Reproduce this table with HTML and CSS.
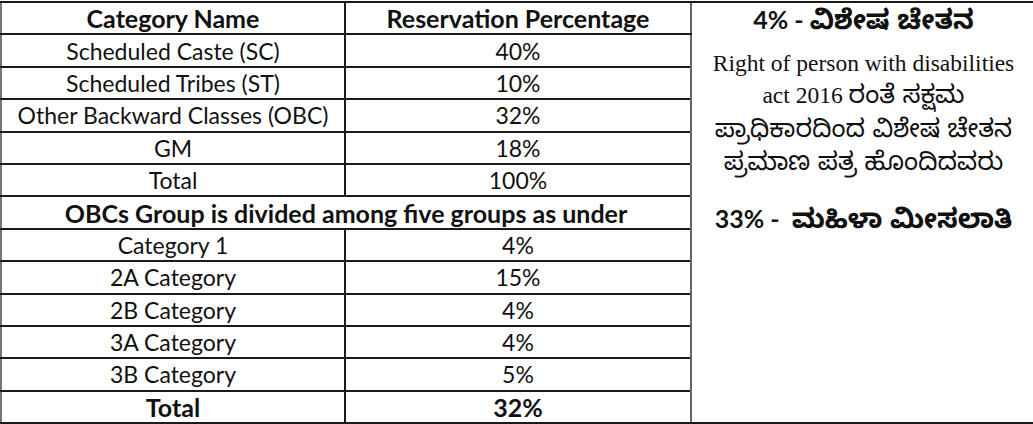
FILE: index.html
```html
<!DOCTYPE html>
<html lang="en">
<head>
<meta charset="utf-8">
<title>Reservation Percentage</title>
<link rel="stylesheet" href="styles.css">
</head>
<body>
<table class="res-table">
  <colgroup>
    <col class="col-name">
    <col class="col-pct">
    <col class="col-note">
  </colgroup>
  <tr>
    <th>Category Name</th>
    <th>Reservation Percentage</th>
    <td class="note" rowspan="13">
      <p class="note-head">4% - <span class="kn">ವಿಶೇಷ ಚೇತನ</span></p>
      <p class="note-body">Right of person with disabilities<br>act 2016 <span class="kn">ರಂತೆ ಸಕ್ಷಮ</span><br><span class="kn">ಪ್ರಾಧಿಕಾರದಿಂದ ವಿಶೇಷ ಚೇತನ</span><br><span class="kn">ಪ್ರಮಾಣ ಪತ್ರ ಹೊಂದಿದವರು</span></p>
      <p class="note-head note-women">33% -&nbsp; <span class="kn">ಮಹಿಳಾ ಮೀಸಲಾತಿ</span></p>
    </td>
  </tr>
  <tr><td>Scheduled Caste (SC)</td><td>40%</td></tr>
  <tr><td>Scheduled Tribes (ST)</td><td>10%</td></tr>
  <tr><td>Other Backward Classes (OBC)</td><td>32%</td></tr>
  <tr><td>GM</td><td>18%</td></tr>
  <tr><td>Total</td><td>100%</td></tr>
  <tr><th colspan="2">OBCs Group is divided among five groups as under</th></tr>
  <tr><td>Category 1</td><td>4%</td></tr>
  <tr><td>2A Category</td><td>15%</td></tr>
  <tr><td>2B Category</td><td>4%</td></tr>
  <tr><td>3A Category</td><td>4%</td></tr>
  <tr><td>3B Category</td><td>5%</td></tr>
  <tr class="total"><td>Total</td><td>32%</td></tr>
</table>
</body>
</html>
```

FILE: styles.css
```css
html, body {
  margin: 0;
  padding: 0;
  background: #ffffff;
}

.res-table {
  border-collapse: collapse;
  table-layout: fixed;
  width: 1034px;
  margin-top: 1px;
  font-family: "Lato", "Open Sans", sans-serif;
  font-size: 23px;
  color: #111111;
}

.col-name { width: 344px; }
.col-pct { width: 346px; }
.col-note { width: 344px; }

.res-table tr {
  height: 32.4px;
}

.res-table th,
.res-table td {
  border-top: 2px solid #1a1a1a;
  border-bottom: 2px solid #1a1a1a;
  border-left: 2px solid #1a1a1a;
  padding: 0;
  text-align: center;
  vertical-align: middle;
  line-height: 28px;
  font-weight: 400;
  white-space: nowrap;
}

.res-table th {
  font-weight: 700;
  font-size: 25px;
}

.res-table tr > :first-child {
  border-left-color: #777777;
}

.res-table .total td {
  font-weight: 700;
  font-size: 25px;
}

.res-table td.note {
  border-left: 2px solid #666666;
  border-right: none;
  vertical-align: top;
  padding: 0;
}

.note p {
  margin: 0;
}

.kn {
  font-family: "Noto Sans Kannada", "Tunga", "Noto Serif Kannada", "Lohit Kannada", sans-serif;
  font-size: 25.5px;
  line-height: 1;
}

.note-head {
  font-family: "Lato", "Open Sans", sans-serif;
  font-weight: 700;
  font-size: 25px;
  line-height: 32px;
}

.note-head .kn {
  font-size: 27px;
}

.note-body {
  margin-top: 8px !important;
  font-family: "Liberation Serif", "Times New Roman", serif;
  font-size: 23.5px;
  line-height: 32px;
}

.note-women {
  margin-top: 22px !important;
}
```
